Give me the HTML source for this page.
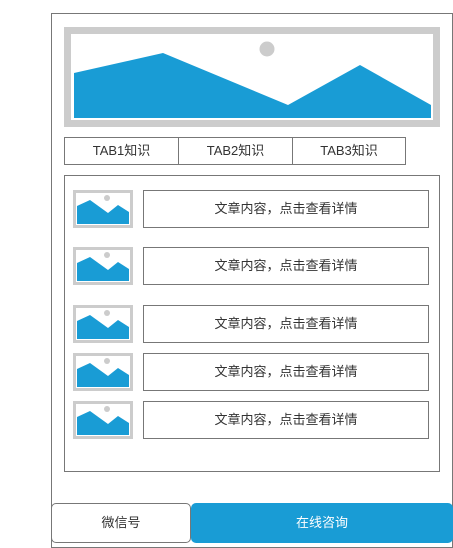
<!DOCTYPE html>
<html><head><meta charset="utf-8"><style>
*{margin:0;padding:0;box-sizing:border-box}
body{width:453px;height:543px;background:#fff;position:relative;overflow:hidden;font-family:"Liberation Sans","Noto Sans CJK SC",sans-serif;color:#333}
.a{position:absolute}
.frame{left:51px;top:13px;width:402px;height:535px;border:1px solid #777}
.tab{top:137px;height:28px;border:1px solid #777;font-size:13px;line-height:26px;text-align:center;color:#333}
.list{left:64px;top:175px;width:376px;height:297px;border:1px solid #777}
.txt{left:143px;width:286px;height:38px;border:1px solid #777;font-size:13px;line-height:36px;text-align:center;color:#333}
.th{left:73px;width:60px;height:38px}
</style></head><body>
<div class="a frame"></div>
<svg class="a" style="left:64px;top:27px" width="376" height="100">
<rect x="0" y="0" width="376" height="100" fill="#ccc"/>
<rect x="7" y="7" width="362" height="86" fill="#fff"/>
<polygon points="10,46 99,26 224,78 296,38 367,78 367,91 10,91" fill="#199cd5"/>
<circle cx="203" cy="22" r="7.5" fill="#ccc"/>
</svg>
<div class="a tab" style="left:64px;width:115px">TAB1知识</div>
<div class="a tab" style="left:178px;width:115px">TAB2知识</div>
<div class="a tab" style="left:292px;width:114px">TAB3知识</div>
<div class="a list"></div>

<svg class="a th" style="top:190px" viewBox="0 0 60 38"><rect width="60" height="38" fill="#ccc"/><rect x="3" y="3" width="54" height="32" fill="#fff"/><polygon points="4,16 17,10 35,23 45,15 56,22 56,34 4,34" fill="#199cd5"/><circle cx="34" cy="8" r="3" fill="#ccc"/></svg>
<div class="a txt" style="top:190px">文章内容，点击查看详情</div>
<svg class="a th" style="top:247px" viewBox="0 0 60 38"><rect width="60" height="38" fill="#ccc"/><rect x="3" y="3" width="54" height="32" fill="#fff"/><polygon points="4,16 17,10 35,23 45,15 56,22 56,34 4,34" fill="#199cd5"/><circle cx="34" cy="8" r="3" fill="#ccc"/></svg>
<div class="a txt" style="top:247px">文章内容，点击查看详情</div>
<svg class="a th" style="top:305px" viewBox="0 0 60 38"><rect width="60" height="38" fill="#ccc"/><rect x="3" y="3" width="54" height="32" fill="#fff"/><polygon points="4,16 17,10 35,23 45,15 56,22 56,34 4,34" fill="#199cd5"/><circle cx="34" cy="8" r="3" fill="#ccc"/></svg>
<div class="a txt" style="top:305px">文章内容，点击查看详情</div>
<svg class="a th" style="top:353px" viewBox="0 0 60 38"><rect width="60" height="38" fill="#ccc"/><rect x="3" y="3" width="54" height="32" fill="#fff"/><polygon points="4,16 17,10 35,23 45,15 56,22 56,34 4,34" fill="#199cd5"/><circle cx="34" cy="8" r="3" fill="#ccc"/></svg>
<div class="a txt" style="top:353px">文章内容，点击查看详情</div>
<svg class="a th" style="top:401px" viewBox="0 0 60 38"><rect width="60" height="38" fill="#ccc"/><rect x="3" y="3" width="54" height="32" fill="#fff"/><polygon points="4,16 17,10 35,23 45,15 56,22 56,34 4,34" fill="#199cd5"/><circle cx="34" cy="8" r="3" fill="#ccc"/></svg>
<div class="a txt" style="top:401px">文章内容，点击查看详情</div>

<div class="a" style="left:51px;top:503px;width:140px;height:40px;border:1px solid #777;border-radius:5px;background:#fff;font-size:13px;line-height:38px;text-align:center;color:#333">微信号</div>
<div class="a" style="left:191px;top:503px;width:262px;height:40px;border-radius:5px;background:#199cd5;font-size:13px;line-height:40px;text-align:center;color:#fff">在线咨询</div>
</body></html>
